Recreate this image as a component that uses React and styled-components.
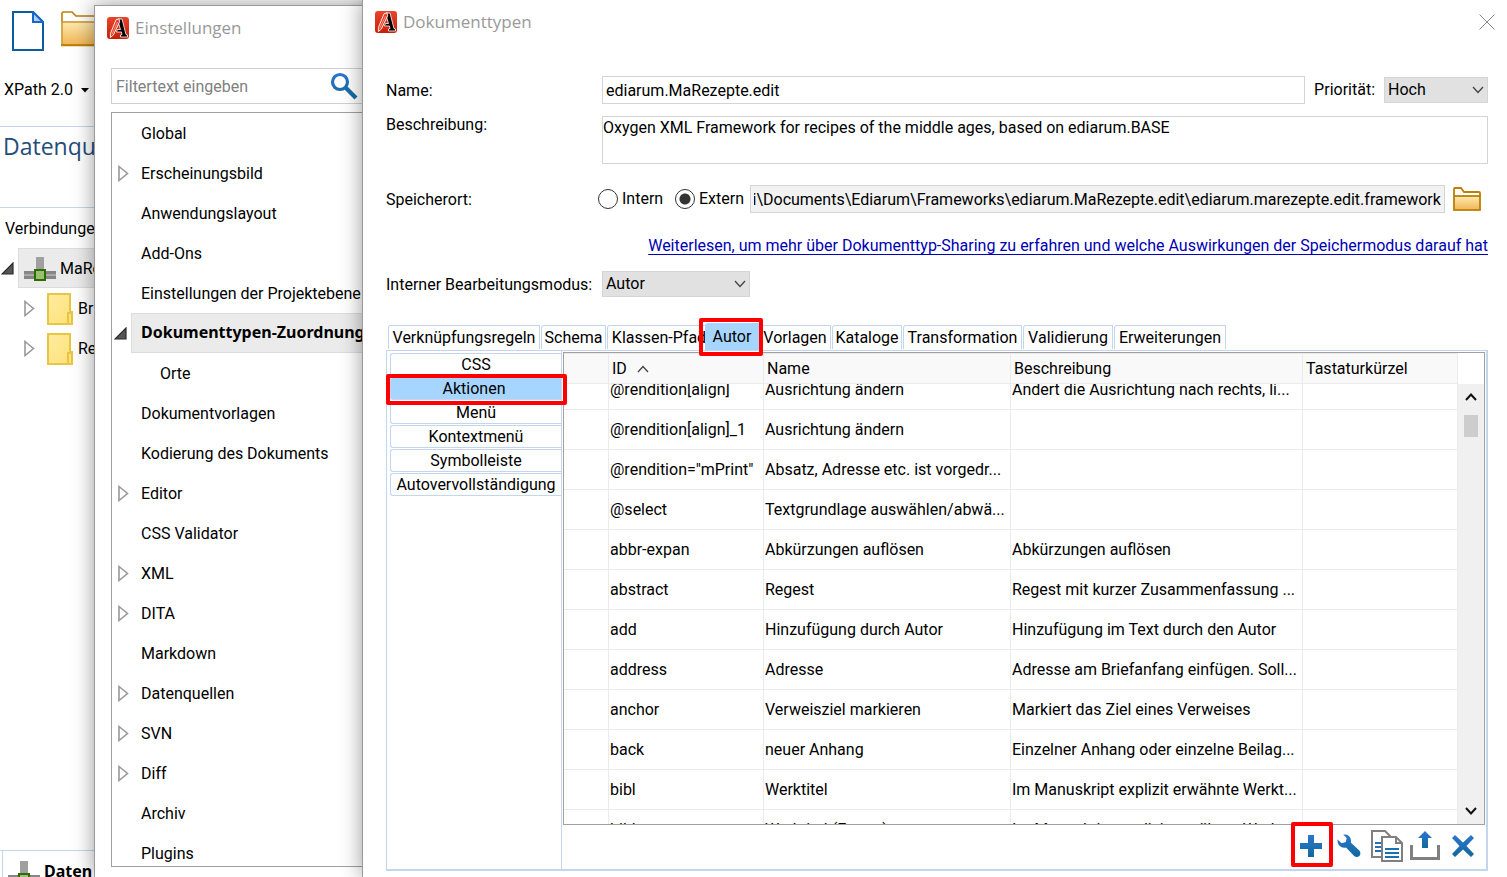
import React, { useLayoutEffect, useRef } from 'react';
import styled, { createGlobalStyle, css } from 'styled-components';

const GlobalStyle = createGlobalStyle`
  *, *::before, *::after { box-sizing: border-box; }
  body { margin: 0; background: #fff; }
  body, button, input, textarea, select {
    font-family: Roboto, "Noto Sans", sans-serif;
    font-size: 16px;
    line-height: 20px;
    color: #000;
  }
  button { padding: 0; border: 0; background: none; cursor: pointer; }
  svg { display: block; flex: none; }
`;

const titleFont = '"Open Sans", "Noto Sans", sans-serif';
const boldFont = '"Noto Sans", sans-serif';

const Desktop = styled.div`
  position: relative;
  height: 100vh;
  min-height: 600px;
  overflow: hidden;
`;

/* ---------- main window ---------- */

const Workspace = styled.section`
  display: flex;
  flex-direction: column;
  height: 100%;
`;

const IconBar = styled.div`
  display: flex;
  align-items: flex-start;
  gap: 17px;
  height: 76px;
  padding: 11px 12px 0;
`;

const XPathBar = styled.div`
  height: 50px;
  padding: 4px;
`;

const XPathButton = styled.button`
  display: flex;
  align-items: center;
  gap: 8px;
`;

const PaneTitle = styled.h2`
  margin: 0;
  height: 82px;
  padding: 3px;
  border: solid #c2d7ee;
  border-width: 1px 0;
  font: 400 23px/32px ${titleFont};
  color: #1f4e79;
`;

const PaneLabel = styled.div`
  height: 40px;
  padding: 11px 5px;
`;

const ConnTree = styled.ul`
  flex: 1;
  margin: 0;
  padding: 0;
  list-style: none;
`;

const ConnRow = styled.li`
  display: flex;
  align-items: center;
  height: 40px;
  padding-left: ${(p) => (p.$child ? 24 : 1)}px;
`;

const ConnItem = styled.span`
  display: flex;
  align-items: center;
  gap: ${(p) => (p.$selected ? 4 : 5)}px;
  flex: 1;
  height: 40px;
  margin-left: 4px;
  padding: 2px 0 0 ${(p) => (p.$selected ? 5 : 8)}px;
  ${(p) => p.$selected && css`
    background: #ebebeb;
    border: 1px solid #dcdcdc;
  `}
`;

const DockBar = styled.div`
  height: 27px;
  padding-left: 2px;
  border-top: 1px solid #c2d7ee;
`;

const DockTab = styled.div`
  display: flex;
  gap: 4px;
  padding: 10px 5px 0;
  border-left: 1px solid #c2d7ee;
  font-family: ${boldFont};
  font-weight: 700;
`;

/* ---------- shared window parts ---------- */

const Window = styled.section`
  position: absolute;
  display: flex;
  flex-direction: column;
  background: #fff;
  border-left: 1px solid #9a9a9a;
  box-shadow: 0 0 20px rgba(0, 0, 0, 0.4);
`;

const SettingsWindow = styled(Window)`
  top: 5px;
  bottom: 0;
  left: 94px;
  width: 320px;
  border-top: 1px solid #9a9a9a;
  padding: 0 16px 10px;
`;

const DocumentWindow = styled(Window)`
  top: 0;
  bottom: 0;
  left: 362px;
  right: 0;
  padding: 0 19px 6px 23px;
`;

const TitleBar = styled.header`
  display: flex;
  align-items: center;
  gap: 6px;
  height: 44px;
  margin: 0 -7px 0 ${(p) => p.$outdent}px;
`;

const Title = styled.h1`
  flex: 1;
  margin: 0;
  font: 400 17px/24px ${titleFont};
  color: #999;
`;

/* ---------- settings ---------- */

const FilterBox = styled.label`
  display: flex;
  align-items: center;
  flex: none;
  height: 36px;
  margin: 18px 0 8px;
  border: 1px solid #d0d0d0;
`;

const FilterInput = styled.input`
  width: 218px;
  padding: 1px 4px 0;
  border: 0;
  outline: 0;
  &::placeholder { color: #808080; opacity: 1; }
`;

const SettingsTree = styled.ul`
  flex: 1;
  min-height: 0;
  overflow: hidden;
  margin: 0;
  padding: 0;
  list-style: none;
  border: 1px solid #a0a0a0;
`;

const TreeRow = styled.li`
  display: flex;
  align-items: center;
  height: 40px;
`;

const Twisty = styled.span`
  width: 19px;
  padding-left: ${(p) => (p.$open ? 2 : 6)}px;
`;

const TreeItem = styled.span`
  flex: 1;
  height: 40px;
  padding: ${(p) => (p.$selected ? 8 : 10)}px 9px;
  padding-left: ${(p) => (p.$nested ? 28 : 9)}px;
  border: 1px solid transparent;
  white-space: nowrap;
  ${(p) => p.$selected && css`
    font-family: ${boldFont};
    font-weight: 700;
    background: #ebebeb;
    border-color: #dcdcdc;
  `}
`;

/* ---------- document type form ---------- */

const Form = styled.form`
  padding-top: 32px;
`;

const FormRow = styled.div`
  display: flex;
  align-items: ${(p) => p.$align || 'center'};
  margin-top: ${(p) => p.$top || 0}px;
`;

const FieldLabel = styled.label`
  flex: none;
  width: ${(p) => p.$width || 216}px;
  padding-top: 2px;
  line-height: 14px;
`;

const TextField = styled.input`
  flex: 1;
  min-width: 0;
  height: 28px;
  padding: 0 3px;
  border: 1px solid #d4d4d4;
  background: ${(p) => (p.readOnly ? '#f2f2f2' : '#fff')};
  outline: 0;
`;

const TextArea = styled.textarea`
  flex: 1;
  height: 48px;
  padding: 1px 0;
  border: 1px solid #d4d4d4;
  resize: none;
  outline: 0;
`;

const InlineLabel = styled.label`
  margin: 0 9px;
`;

const SelectBox = styled.span`
  position: relative;
  width: ${(p) => p.$width}px;
  svg {
    position: absolute;
    top: 9px;
    right: 4px;
    pointer-events: none;
  }
`;

const Select = styled.select`
  display: block;
  width: 100%;
  height: 26px;
  padding: 0 3px;
  border: 1px solid #d4d4d4;
  border-radius: 0;
  background: #e1e1e1;
  appearance: none;
  outline: 0;
`;

const RadioLabel = styled.label`
  display: flex;
  align-items: center;
  gap: 4px;
  width: ${(p) => p.$width}px;
`;

const Radio = styled.input`
  width: 20px;
  height: 20px;
  margin: 0;
  border: 1px solid #333;
  border-radius: 50%;
  appearance: none;
  &:checked { background: radial-gradient(circle, #333 5px, #fff 6px); }
`;

const IconButton = styled.button`
  position: relative;
  display: flex;
  align-items: center;
  justify-content: center;
  width: ${(p) => p.$width || 38}px;
  height: ${(p) => p.$height || 32}px;
`;

const LinkLine = styled.div`
  margin-top: 23px;
  text-align: right;
`;

const DocLink = styled.a`
  color: #0000b4;
  text-decoration: underline;
  text-underline-offset: 3px;
  white-space: nowrap;
`;

/* ---------- tabs ---------- */

const marked = css`
  &::after {
    content: '';
    position: absolute;
    inset: ${(p) => p.$mark};
    border: 4px solid #f00;
    border-radius: 2px;
    pointer-events: none;
    z-index: 2;
  }
`;

const TabStrip = styled.div`
  display: flex;
  align-items: flex-end;
  height: 27px;
  margin-top: 26px;
  padding-left: 2px;
`;

const Tab = styled.button`
  position: relative;
  flex: none;
  width: ${(p) => p.$width}px;
  height: 24px;
  margin: 0 1px 1px 0;
  border: 1px solid #c2d7ee;
  border-bottom: 0;
  border-radius: 3px 0 0 0;
  background: #fff;
  white-space: nowrap;
  ${(p) => p.$active && css`
    height: 27px;
    margin: 0 0 0 -7px;
    border: 0;
    background: #a6d6ff;
    z-index: 1;
  `}
  ${(p) => p.$mark && marked}
`;

const Panel = styled.div`
  display: flex;
  flex: 1;
  min-height: 0;
  border: solid #c2d7ee;
  border-width: 1px 2px 2px 1px;
`;

const SideTabs = styled.div`
  display: flex;
  flex-direction: column;
  flex: none;
  gap: 1px;
  width: 174px;
  padding: 2px 0 0 3px;
`;

const SideTab = styled.button`
  position: relative;
  height: 23px;
  border: 1px solid #c2d7ee;
  border-right: 0;
  border-radius: 3px 0 0 3px;
  background: #fff;
  ${(p) => p.$active && css`
    background: #a6d6ff;
    padding-right: 4px;
  `}
  ${(p) => p.$mark && marked}
`;

const Content = styled.div`
  display: flex;
  flex-direction: column;
  flex: 1;
  min-width: 0;
  padding: 1px 1px 0;
  border-left: 1px solid #c2d7ee;
`;

const TableFrame = styled.div`
  display: flex;
  flex: 1;
  min-height: 0;
  border: 1px solid #a0a0a0;
`;

const TableView = styled.div`
  flex: 1;
  min-width: 0;
  overflow: hidden;
`;

const Table = styled.table`
  width: 100%;
  table-layout: fixed;
  border-collapse: separate;
  border-spacing: 0;
`;

const Col = styled.col`
  width: ${(p) => p.$width};
`;

const HeadCell = styled.th`
  position: sticky;
  top: 0;
  height: 31px;
  padding: 0 3px;
  border: solid #ebebeb;
  border-width: 1px 1px 1px 0;
  background: #f9f9f9;
  font-weight: 400;
  text-align: left;
`;

const HeadLabel = styled.span`
  display: flex;
  align-items: center;
  gap: 10px;
`;

const Cell = styled.td`
  height: 40px;
  padding: 0 1px;
  border: solid #ebebeb;
  border-width: 0 1px 1px 0;
  overflow: hidden;
  white-space: nowrap;
`;

const ScrollBar = styled.div`
  display: flex;
  flex-direction: column;
  align-items: center;
  width: 26px;
  margin-top: 31px;
  background: #f0f0f0;
`;

const ScrollButton = styled.button`
  display: flex;
  align-items: center;
  justify-content: center;
  width: 26px;
  height: 26px;
`;

const ScrollTrack = styled.div`
  flex: 1;
  padding-top: 5px;
`;

const ScrollThumb = styled.div`
  width: 14px;
  height: 22px;
  background: #cdcdcd;
`;

const ActionBar = styled.div`
  display: flex;
  justify-content: flex-end;
  align-items: center;
  height: 44px;
  padding: 0 3px 2px 0;
`;

const ActionButton = styled(IconButton)`
  ${(p) => p.$mark && marked}
`;

/* ---------- drawings ---------- */

const HiddenSvg = styled.svg`
  position: absolute;
`;

const Defs = () => (
  <HiddenSvg width="0" height="0" aria-hidden="true">
    <defs>
      <linearGradient id="blue" x1="0" y1="0" x2="0" y2="1">
        <stop offset="0" stopColor="#2e75cf" />
        <stop offset="1" stopColor="#0f6a9a" />
      </linearGradient>
      <linearGradient id="blueUser" gradientUnits="userSpaceOnUse" x1="0" y1="0" x2="0" y2="28">
        <stop offset="0" stopColor="#2e75cf" />
        <stop offset="1" stopColor="#0f6a9a" />
      </linearGradient>
      <linearGradient id="gold" x1="0" y1="0" x2="0" y2="1">
        <stop offset="0" stopColor="#ffe9ae" />
        <stop offset="1" stopColor="#f0b656" />
      </linearGradient>
      <linearGradient id="red" x1="0" y1="0" x2="0" y2="1">
        <stop offset="0" stopColor="#e8452c" />
        <stop offset="1" stopColor="#c81e08" />
      </linearGradient>
      <linearGradient id="paper" x1="0" y1="0" x2="1" y2="1">
        <stop offset="0" stopColor="#ffeca0" />
        <stop offset="1" stopColor="#ffe07a" />
      </linearGradient>
    </defs>
  </HiddenSvg>
);

const Logo = () => (
  <svg width="22" height="22" viewBox="0 0 22 22">
    <rect width="22" height="22" rx="3" fill="url(#red)" />
    <path d="M11 2 L15 2 L19 17.5 L20.5 18 L20.5 20 L13.5 20 L13.5 18 L15 17.5 L14.4 15 L9.5 15 L10.5 12.5 L13.5 12.5 L11.5 6 Z" fill="#000" stroke="#fff" strokeWidth="0.8" />
    <path d="M9 2.8 L12 1.8 L12.6 4.8 L6.4 18 L3.4 20.5 L3.4 16.6 Z" fill="#f03a20" stroke="#fff" strokeWidth="0.9" />
    <path d="M10.5 5 L4.8 17.5" stroke="#ffc8bc" strokeWidth="0.6" />
  </svg>
);

const NewFileIcon = () => (
  <svg width="32" height="40" viewBox="0 0 32 40">
    <path d="M1 1 H21 L31 11 V39 H1 Z" fill="#fff" stroke="#0f5c9c" strokeWidth="2" />
    <path d="M21 1 V11 H31 Z" fill="#b4cdf0" stroke="#1568c8" strokeWidth="2" />
  </svg>
);

const FolderIcon = ({ width, height }) => (
  <svg width={width} height={height} viewBox="0 0 28 24">
    <path d="M1 9 V2 Q1 1 2 1 H8 L11 5 H26 Q27 5 27 6 V9" fill="#fff" stroke="#bd7f06" strokeWidth="1.8" />
    <rect x="1" y="9" width="26" height="14" fill="url(#gold)" stroke="#bd7f06" strokeWidth="1.8" />
  </svg>
);

const LargeFolderIcon = () => (
  <svg width="48" height="36" viewBox="0 0 48 36">
    <path d="M1 11 V2 L2 1 H11 L15 5 H46 L47 6 V11" fill="#fff" stroke="#bd7f06" strokeWidth="1.6" />
    <rect x="1" y="11" width="46" height="23" fill="url(#gold)" stroke="#cf9a30" strokeWidth="1.6" />
    <path d="M0 34.2 H48" stroke="#bd7f06" strokeWidth="2" />
  </svg>
);

const ConnectionIcon = () => (
  <svg width="32" height="24" viewBox="0 0 32 24">
    <rect x="12" width="8" height="14" fill="#a0a0a0" />
    <path d="M0 14 H32 V22 H0 Z" fill="#868686" />
    <path d="M0 17 H32 V19 H0 Z" fill="#aaa" />
    <rect x="11" y="13" width="10" height="10" fill="#98c272" stroke="#2f6a05" strokeWidth="2" />
  </svg>
);

const CollectionIcon = () => (
  <svg width="26" height="32" viewBox="0 0 26 32">
    <path d="M1 1 H23 V19 H25 V31 H1 Z" fill="url(#paper)" stroke="#e9c544" strokeWidth="2" />
    <path d="M21 31 V20 H25" fill="none" stroke="#e9c544" strokeWidth="2" />
  </svg>
);

const ClosedTwisty = () => (
  <svg width="11" height="17" viewBox="0 0 11 17">
    <path d="M1 1.5 L9.5 8.5 L1 15.5 Z" fill="#fff" stroke="#999" strokeWidth="1.6" />
  </svg>
);

const OpenTwisty = () => (
  <svg width="13" height="13" viewBox="0 0 13 13">
    <path d="M12 1 V12 H1 Z" fill="#555" stroke="#2a2a2a" strokeWidth="1.2" />
  </svg>
);

const CaretDown = () => (
  <svg width="8" height="5" viewBox="0 0 8 5"><path d="M0 0 H8 L4 4.5 Z" fill="#000" /></svg>
);

const Chevron = ({ up, stroke = '#444', weight = 1.3 }) => (
  <svg width="12" height="8" viewBox="0 0 12 8">
    <path d={up ? 'M1 7 L6 1.5 L11 7' : 'M1 1 L6 6.5 L11 1'} fill="none" stroke={stroke} strokeWidth={weight} />
  </svg>
);

const SearchIcon = () => (
  <svg width="28" height="28" viewBox="0 0 28 28">
    <circle cx="10" cy="10" r="7.5" fill="none" stroke="url(#blueUser)" strokeWidth="3.2" />
    <path d="M15.5 15.5 L26 26" stroke="url(#blueUser)" strokeWidth="4.2" />
  </svg>
);

const CloseIcon = () => (
  <svg width="16" height="16" viewBox="0 0 16 16">
    <path d="M0.5 0.5 L15.5 15.5 M15.5 0.5 L0.5 15.5" stroke="#888" strokeWidth="1" />
  </svg>
);

const PlusIcon = () => (
  <svg width="22" height="22" viewBox="0 0 22 22">
    <path d="M8 0 H14 V8 H22 V14 H14 V22 H8 V14 H0 V8 H8 Z" fill="url(#blue)" />
  </svg>
);

const WrenchIcon = () => (
  <svg width="24" height="24" viewBox="0 0 24 24">
    <path d="M6.2 0.6 C11 -0.4 15 3.2 13.8 8.6 L22.3 16.6 C23.9 18.3 23.6 20.8 22.3 22 C21 23.3 18.8 23.5 17.2 22 L9 13.6 C4.6 14.8 0 11.3 0.6 5.6 L4.6 9.2 L8.8 8 L9.6 4 Z" fill="url(#blue)" />
  </svg>
);

const CopyIcon = () => (
  <svg width="32" height="32" viewBox="0 0 32 32">
    <path d="M1 1 H14 L19 6 V27 H1 Z" fill="#fff" stroke="#808080" strokeWidth="2" />
    <path d="M4 12 H12 V14 H4 Z M4 16 H12 V18 H4 Z M4 20 H12 V22 H4 Z" fill="#2570bd" />
    <path d="M11 7 H25 L31 13 V31 H11 Z" fill="#fff" stroke="#808080" strokeWidth="2" />
    <path d="M25 7 V13 H31" fill="none" stroke="#808080" strokeWidth="2" />
    <path d="M14 18 H28 V20 H14 Z M14 22 H28 V24 H14 Z M14 26 H28 V28 H14 Z" fill="#1a6fae" />
  </svg>
);

const ExportIcon = () => (
  <svg width="30" height="30" viewBox="0 0 30 30">
    <path d="M1.5 14 V27.5 H28.5 V14" fill="none" stroke="#808080" strokeWidth="3" />
    <path d="M15 0 L22 7 H18 V17 H12 V7 H8 Z" fill="url(#blue)" />
  </svg>
);

const DeleteIcon = () => (
  <svg width="22" height="22" viewBox="0 0 22 22">
    <path d="M3 0 L11 7.5 L19 0 L22 3 L14.5 11 L22 19 L19 22 L11 14.5 L3 22 L0 19 L7.5 11 L0 3 Z" fill="url(#blue)" />
  </svg>
);

/* ---------- data ---------- */

const settings = [
  { name: 'Global' },
  { name: 'Erscheinungsbild', closed: true },
  { name: 'Anwendungslayout' },
  { name: 'Add-Ons' },
  { name: 'Einstellungen der Projektebene' },
  { name: 'Dokumenttypen-Zuordnung', open: true },
  { name: 'Orte', nested: true },
  { name: 'Dokumentvorlagen' },
  { name: 'Kodierung des Dokuments' },
  { name: 'Editor', closed: true },
  { name: 'CSS Validator' },
  { name: 'XML', closed: true },
  { name: 'DITA', closed: true },
  { name: 'Markdown' },
  { name: 'Datenquellen', closed: true },
  { name: 'SVN', closed: true },
  { name: 'Diff', closed: true },
  { name: 'Archiv' },
  { name: 'Plugins' },
];

const tabs = [
  ['Verknüpfungsregeln', 152],
  ['Schema', 65],
  ['Klassen-Pfad', 104],
  ['Autor', 54],
  ['Vorlagen', 72],
  ['Kataloge', 70],
  ['Transformation', 119],
  ['Validierung', 90],
  ['Erweiterungen', 112],
];
const sideTabs = ['CSS', 'Aktionen', 'Menü', 'Kontextmenü', 'Symbolleiste', 'Autovervollständigung'];

const actions = [
  ['@rendition[align]', 'Ausrichtung ändern', 'Ändert die Ausrichtung nach rechts, li...'],
  ['@rendition[align]_1', 'Ausrichtung ändern', ''],
  ['@rendition="mPrint"', 'Absatz, Adresse etc. ist vorgedr...', ''],
  ['@select', 'Textgrundlage auswählen/abwä...', ''],
  ['abbr-expan', 'Abkürzungen auflösen', 'Abkürzungen auflösen'],
  ['abstract', 'Regest', 'Regest mit kurzer Zusammenfassung ...'],
  ['add', 'Hinzufügung durch Autor', 'Hinzufügung im Text durch den Autor'],
  ['address', 'Adresse', 'Adresse am Briefanfang einfügen. Soll...'],
  ['anchor', 'Verweisziel markieren', 'Markiert das Ziel eines Verweises'],
  ['back', 'neuer Anhang', 'Einzelner Anhang oder einzelne Beilag...'],
  ['bibl', 'Werktitel', 'Im Manuskript explizit erwähnte Werkt...'],
  ['bibl-extern', 'Werktitel (Extern)', 'Im Manuskript explizit erwähnte Werkt...'],
];

const location = 'ori\\Documents\\Ediarum\\Frameworks\\ediarum.MaRezepte.edit\\ediarum.marezepte.edit.framework';

/* ---------- views ---------- */

function MainWindow() {
  return (
    <Workspace>
      <IconBar>
        <NewFileIcon />
        <LargeFolderIcon />
      </IconBar>
      <XPathBar>
        <XPathButton type="button">XPath 2.0 <CaretDown /></XPathButton>
      </XPathBar>
      <PaneTitle>Datenqu</PaneTitle>
      <PaneLabel>Verbindunge</PaneLabel>
      <ConnTree>
        <ConnRow>
          <OpenTwisty />
          <ConnItem $selected><ConnectionIcon />MaRe</ConnItem>
        </ConnRow>
        <ConnRow $child>
          <ClosedTwisty />
          <ConnItem><CollectionIcon />Bri</ConnItem>
        </ConnRow>
        <ConnRow $child>
          <ClosedTwisty />
          <ConnItem><CollectionIcon />Re</ConnItem>
        </ConnRow>
      </ConnTree>
      <DockBar>
        <DockTab><ConnectionIcon />Daten</DockTab>
      </DockBar>
    </Workspace>
  );
}

function Settings() {
  return (
    <SettingsWindow>
      <TitleBar $outdent={-4}>
        <Logo />
        <Title>Einstellungen</Title>
      </TitleBar>
      <FilterBox>
        <FilterInput type="text" placeholder="Filtertext eingeben" aria-label="Filtertext eingeben" />
        <SearchIcon />
      </FilterBox>
      <SettingsTree>
        {settings.map((s) => (
          <TreeRow key={s.name}>
            <Twisty $open={s.open}>
              {s.closed && <ClosedTwisty />}
              {s.open && <OpenTwisty />}
            </Twisty>
            <TreeItem $nested={s.nested} $selected={s.open}>{s.name}</TreeItem>
          </TreeRow>
        ))}
      </SettingsTree>
    </SettingsWindow>
  );
}

function ActionTable() {
  const view = useRef(null);
  useLayoutEffect(() => { view.current.scrollTop = 14; }, []);
  return (
    <TableFrame>
      <TableView ref={view}>
        <Table>
          <colgroup>
            <Col $width="45px" />
            <Col $width="155px" />
            <Col $width="247px" />
            <Col $width="292px" />
            <Col $width="auto" />
          </colgroup>
          <thead>
            <tr>
              <HeadCell />
              <HeadCell><HeadLabel>ID <Chevron up /></HeadLabel></HeadCell>
              <HeadCell>Name</HeadCell>
              <HeadCell>Beschreibung</HeadCell>
              <HeadCell>Tastaturkürzel</HeadCell>
            </tr>
          </thead>
          <tbody>
            {actions.map(([id, name, text]) => (
              <tr key={id}>
                <Cell />
                <Cell>{id}</Cell>
                <Cell>{name}</Cell>
                <Cell>{text}</Cell>
                <Cell />
              </tr>
            ))}
          </tbody>
        </Table>
      </TableView>
      <ScrollBar>
        <ScrollButton type="button" aria-label="Nach oben"><Chevron up stroke="#111" weight={2} /></ScrollButton>
        <ScrollTrack><ScrollThumb /></ScrollTrack>
        <ScrollButton type="button" aria-label="Nach unten"><Chevron stroke="#111" weight={2} /></ScrollButton>
      </ScrollBar>
    </TableFrame>
  );
}

function DocumentTypes() {
  const path = useRef(null);
  useLayoutEffect(() => { path.current.scrollLeft = path.current.scrollWidth; }, []);
  return (
    <DocumentWindow>
      <TitleBar $outdent={-11}>
        <Logo />
        <Title>Dokumenttypen</Title>
        <IconButton type="button" $width={16} aria-label="Schließen"><CloseIcon /></IconButton>
      </TitleBar>
      <Form>
        <FormRow>
          <FieldLabel htmlFor="name">Name:</FieldLabel>
          <TextField id="name" defaultValue="ediarum.MaRezepte.edit" />
          <InlineLabel htmlFor="priority">Priorität:</InlineLabel>
          <SelectBox $width={104}>
            <Select id="priority"><option>Hoch</option></Select>
            <Chevron />
          </SelectBox>
        </FormRow>
        <FormRow $top={12} $align="flex-start">
          <FieldLabel htmlFor="text">Beschreibung:</FieldLabel>
          <TextArea id="text" defaultValue="Oxygen XML Framework for recipes of the middle ages, based on ediarum.BASE" />
        </FormRow>
        <FormRow $top={21}>
          <FieldLabel as="span" $width={212}>Speicherort:</FieldLabel>
          <RadioLabel $width={77}><Radio type="radio" name="store" />Intern</RadioLabel>
          <RadioLabel $width={75}><Radio type="radio" name="store" defaultChecked />Extern</RadioLabel>
          <TextField ref={path} readOnly defaultValue={location} aria-label="Pfad" />
          <IconButton type="button" $width={43} $height={28} aria-label="Ordner wählen"><FolderIcon width={28} height={24} /></IconButton>
        </FormRow>
        <LinkLine>
          <DocLink href="#sharing">Weiterlesen, um mehr über Dokumenttyp-Sharing zu erfahren und welche Auswirkungen der Speichermodus darauf hat</DocLink>
        </LinkLine>
        <FormRow $top={15}>
          <FieldLabel htmlFor="mode">Interner Bearbeitungsmodus:</FieldLabel>
          <SelectBox $width={148}>
            <Select id="mode"><option>Autor</option></Select>
            <Chevron />
          </SelectBox>
        </FormRow>
      </Form>
      <TabStrip>
        {tabs.map(([name, width]) => (
          <Tab key={name} type="button" $width={width} $active={name === 'Autor'} $mark={name === 'Autor' && '-5px -4px -6px -6px'}>{name}</Tab>
        ))}
      </TabStrip>
      <Panel>
        <SideTabs>
          {sideTabs.map((t) => (
            <SideTab key={t} type="button" $active={t === 'Aktionen'} $mark={t === 'Aktionen' && '-4px -6px -6px -5px'}>{t}</SideTab>
          ))}
        </SideTabs>
        <Content>
          <ActionTable />
          <ActionBar>
            <ActionButton type="button" aria-label="Neu" $mark="-8px -3px -5px -1px"><PlusIcon /></ActionButton>
            <ActionButton type="button" aria-label="Bearbeiten"><WrenchIcon /></ActionButton>
            <ActionButton type="button" aria-label="Duplizieren"><CopyIcon /></ActionButton>
            <ActionButton type="button" aria-label="Exportieren"><ExportIcon /></ActionButton>
            <ActionButton type="button" aria-label="Löschen"><DeleteIcon /></ActionButton>
          </ActionBar>
        </Content>
      </Panel>
    </DocumentWindow>
  );
}

export default function App() {
  return (
    <Desktop>
      <GlobalStyle />
      <Defs />
      <MainWindow />
      <Settings />
      <DocumentTypes />
    </Desktop>
  );
}
